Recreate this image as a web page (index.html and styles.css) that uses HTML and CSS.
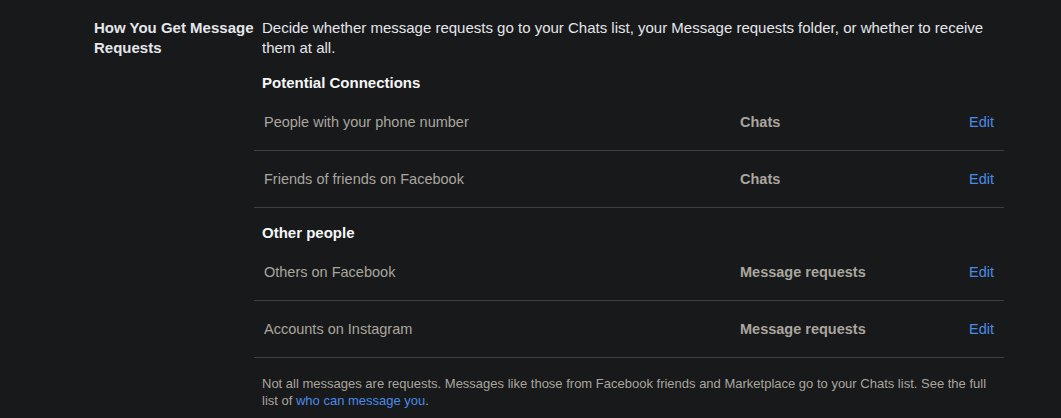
FILE: index.html
```html
<!DOCTYPE html>
<html lang="en">
<head>
    <meta charset="UTF-8">
    <meta name="viewport" content="width=device-width, initial-scale=1.0">
    <title>Message Requests</title>
    <link rel="stylesheet" href="styles.css">
</head>
<body>
    <div class="section">
        <div class="section-label">How You Get Message Requests</div>
        <div class="section-body">
            <p class="intro">Decide whether message requests go to your Chats list, your Message requests folder, or whether to receive them at all.</p>

            <h3 class="group-title">Potential Connections</h3>
            <div class="row">
                <span class="row-name">People with your phone number</span>
                <span class="row-value">Chats</span>
                <a class="row-edit" href="#">Edit</a>
            </div>
            <div class="row">
                <span class="row-name">Friends of friends on Facebook</span>
                <span class="row-value">Chats</span>
                <a class="row-edit" href="#">Edit</a>
            </div>

            <h3 class="group-title">Other people</h3>
            <div class="row">
                <span class="row-name">Others on Facebook</span>
                <span class="row-value">Message requests</span>
                <a class="row-edit" href="#">Edit</a>
            </div>
            <div class="row">
                <span class="row-name">Accounts on Instagram</span>
                <span class="row-value">Message requests</span>
                <a class="row-edit" href="#">Edit</a>
            </div>

            <p class="note">Not all messages are requests. Messages like those from Facebook friends and Marketplace go to your Chats list. See the full list of <a href="#">who can message you</a>.</p>
        </div>
    </div>
</body>
</html>
```

FILE: styles.css
```css
body {
    margin: 0;
    background-color: #18191a;
    color: #e4e6eb;
    font-family: "Liberation Sans", Arial, sans-serif;
}

.section {
    display: flex;
    margin-left: 84px;
    width: 920px;
    padding-top: 18px;
    border-bottom: 1px solid #3e4042;
}

.section-label {
    width: 160px;
    padding-left: 10px;
    font-size: 15px;
    font-weight: bold;
    line-height: 20px;
    color: #e4e6eb;
}

.section-body {
    flex: 1;
}

.intro {
    margin: 0 0 0 8px;
    max-width: 728px;
    font-size: 15px;
    line-height: 20px;
    color: #e4e6eb;
}

.group-title {
    margin: 15px 0 1px 8px;
    font-size: 15px;
    line-height: 20px;
    font-weight: bold;
    color: #f5f6f7;
}

.row {
    display: flex;
    align-items: center;
    height: 56px;
    padding: 0 10px;
    border-bottom: 1px solid #3e4042;
    font-size: 14.5px;
}

.row-name {
    flex: 1;
    color: #aaa69f;
}

.row-value {
    width: 229px;
    font-weight: bold;
    color: #aaa69f;
}

.row-edit {
    color: #4b8be6;
    text-decoration: none;
}

.note {
    margin: 17px 0 9px 8px;
    max-width: 731px;
    font-size: 13px;
    line-height: 17px;
    color: #aaa69f;
}

.note a {
    color: #4b8be6;
    text-decoration: none;
}
```
